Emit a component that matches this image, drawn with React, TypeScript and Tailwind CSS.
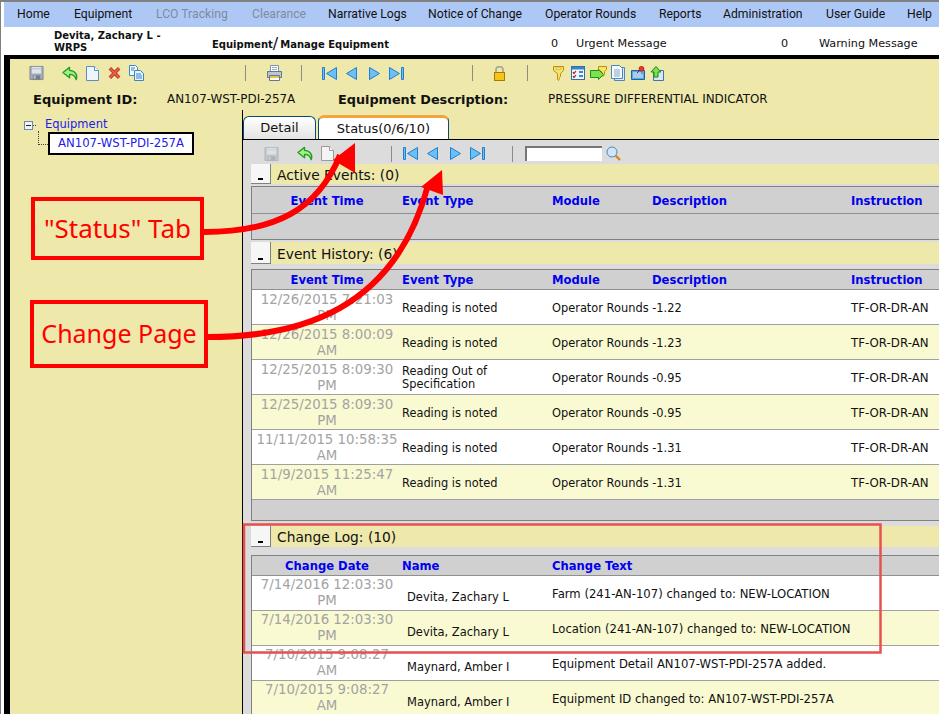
import React from "react";

const Save = ({ dim = false }: { dim?: boolean }) => (
  <svg width="15" height="16" viewBox="0 0 16 16" opacity={dim ? 0.45 : 1}>
    <path d="M1 1h14v14H1z" fill="#a4adb6" stroke="#838b94" />
    <rect x="3" y="1.5" width="10" height="7" fill="#dfe6ee" />
    <rect x="3" y="3" width="10" height="1" fill="#b4bec9" />
    <rect x="4" y="10.5" width="8" height="4.5" fill="#767e87" />
    <rect x="5" y="11" width="2" height="3" fill="#c8ced4" />
  </svg>
);
const Back = () => (
  <svg width="17" height="15" viewBox="0 0 18 15">
    <path d="M8 1 1 6.5 8 12V8.5c3.500 0 6 1.200 7 5.500 2-5-1-9.500-7-9.800z" fill="#a6ee86" stroke="#1f9e1f" strokeWidth="1.400" strokeLinejoin="round" />
  </svg>
);
const Doc = ({ dim = false }: { dim?: boolean }) => (
  <svg width="13" height="15" viewBox="0 0 13 15">
    <path d="M.5.500h8l4 4v10H.5z" fill={dim ? "#f4f4f4" : "#eef5fc"} stroke={dim ? "#9a9a9a" : "#5a8fc4"} />
    <path d="M8.500.500v4h4" fill="#fff" stroke={dim ? "#9a9a9a" : "#5a8fc4"} />
  </svg>
);
const Cross = () => (
  <svg width="13" height="14" viewBox="0 0 14 14">
    <path d="M2 2 12 12M12 2 2 12" stroke="#b5382a" strokeWidth="3.800" />
    <path d="M2 2 12 12M12 2 2 12" stroke="#f0603f" strokeWidth="1.800" />
  </svg>
);
const Copy = () => (
  <svg width="15" height="16" viewBox="0 0 15 16">
    <path d="M.5.500h6l2 2v8H.5z" fill="#f2f8fd" stroke="#3c86c6" />
    <path d="M5.500 5.500h6l3 3v7h-9z" fill="#e6f1fb" stroke="#3c86c6" />
    <path d="M2 3h4M2 5h3M7 9h5M7 11h6M7 13h6" stroke="#3c86c6" />
  </svg>
);
const Print = () => (
  <svg width="15" height="16" viewBox="0 0 15 16">
    <path d="M3.500.500h8v6h-8z" fill="#fff" stroke="#7f95ac" />
    <path d="M.5 6.500h14v6H.5z" fill="#b9c7d4" stroke="#64798e" />
    <path d="M2.500 10.500h10v5h-10z" fill="#fff" stroke="#64798e" />
    <rect x="3" y="11" width="9" height="2" fill="#f0c040" />
    <path d="M5 2.500h5M5 4.500h5" stroke="#9db0c2" />
  </svg>
);
const navFill = "#6cc0f5";
const navStroke = "#1f7fd0";
const First = () => (
  <svg width="15" height="13" viewBox="0 0 15 13">
    <path d="M.5.500h2v12h-2z" fill={navFill} stroke={navStroke} />
    <path d="M14.500.500v12l-10-6z" fill={navFill} stroke={navStroke} />
  </svg>
);
const Prev = () => (
  <svg width="11" height="13" viewBox="0 0 11 13">
    <path d="M10.500.500v12l-10-6z" fill={navFill} stroke={navStroke} />
  </svg>
);
const Next = () => (
  <svg width="11" height="13" viewBox="0 0 11 13">
    <path d="M.5.500v12l10-6z" fill={navFill} stroke={navStroke} />
  </svg>
);
const Last = () => (
  <svg width="15" height="13" viewBox="0 0 15 13">
    <path d="M.5.500v12l10-6z" fill={navFill} stroke={navStroke} />
    <path d="M12.500.500h2v12h-2z" fill={navFill} stroke={navStroke} />
  </svg>
);
const Lock = () => (
  <svg width="11" height="15" viewBox="0 0 11 15">
    <path d="M2 7V3.500a3.500 3 0 0 1 7 0V7" fill="none" stroke="#a8a8a0" strokeWidth="1.800" />
    <rect x=".5" y="6.500" width="10" height="8" fill="#f5c518" stroke="#a67c00" />
  </svg>
);
const Key = () => (
  <svg width="11" height="15" viewBox="0 0 11 15">
    <path d="M.5.500h10v4l-3 3v3l-1 1v1l-1 2-1-1V7.500l-4-3z" fill="#f7e26b" stroke="#c09000" />
    <rect x="3" y="2" width="5" height="1.500" fill="#fff" stroke="#c09000" strokeWidth=".5" />
  </svg>
);
const Check = () => (
  <svg width="14" height="14" viewBox="0 0 14 14">
    <rect x=".5" y=".5" width="13" height="13" fill="#eef5fb" stroke="#2f6fb0" />
    <rect x="1" y="1" width="12" height="2.500" fill="#3c86c6" />
    <path d="M2 6l1 1.500L5 5M2 10l1 1.500L5 9" stroke="#a01818" strokeWidth="1.200" fill="none" />
    <path d="M8 6h4M8 10h4" stroke="#3c86c6" strokeWidth="2" />
  </svg>
);
const ArrowKey = () => (
  <svg width="17" height="15" viewBox="0 0 17 15">
    <path d="M8.500.500h8v3l-2 2v3l-1.500 2-1-1V6l-3.500-2.500z" fill="#f7e26b" stroke="#c09000" />
    <path d="M.5 4.500h8v-1l5 5-5 5v-2h-8z" fill="#7fe04f" stroke="#189018" />
  </svg>
);
const Pages = () => (
  <svg width="14" height="16" viewBox="0 0 14 16">
    <path d="M3.500 2.500h10v13h-10z" fill="#dbe9f7" stroke="#4a86c0" />
    <path d="M.5.500h8l3 3v10H.5z" fill="#f4f9fe" stroke="#4a86c0" />
    <path d="M3 5h6M3 7h6M3 9h6M3 11h6" stroke="#7fa8d0" />
  </svg>
);
const Pin = () => (
  <svg width="15" height="14" viewBox="0 0 15 14">
    <path d="M.5 4.500h13v9H.5z" fill="#5aa6e0" stroke="#1f62a8" />
    <path d="M2 7h8M2 9h10M2 11h10" stroke="#e8f3fc" />
    <circle cx="10.500" cy="2.800" r="2.500" fill="#e8352a" stroke="#a01810" strokeWidth=".6" />
    <path d="M9 4 6 7" stroke="#a01810" />
  </svg>
);
const Up = () => (
  <svg width="14" height="15" viewBox="0 0 14 15">
    <path d="M3.500 4.500h10v10h-10z" fill="#d6e6f5" stroke="#3a78b5" />
    <path d="M6 .500 11 6H8v5H4V6H1z" fill="#7fe04f" stroke="#108a10" />
  </svg>
);
const Magnifier = () => (
  <svg width="15" height="15" viewBox="0 0 15 15">
    <circle cx="6" cy="6" r="5" fill="#cfe6f8" stroke="#4a86c0" />
    <path d="M9.500 9.500 14 14" stroke="#d08a20" strokeWidth="2.400" />
  </svg>
);
const Sep = ({ c = "bg-[#8c8c80]" }: { c?: string }) => <div className={`w-px h-[16px] ${c}`} />;

const menu: [string, number, boolean?][] = [
  ["Home", 57],
  ["Equipment", 82],
  ["LCO Tracking", 96, true],
  ["Clearance", 76, true],
  ["Narrative Logs", 100],
  ["Notice of Change", 117],
  ["Operator Rounds", 114],
  ["Reports", 64],
  ["Administration", 103],
  ["User Guide", 81],
  ["Help", 28],
];

const Band = ({ title, className = "" }: { title: string; className?: string }) => (
  <div className={`ml-[8px] flex items-center bg-[#eee8aa] ${className}`}>
    <div className="w-[20px] h-full bg-[#f6f6f6] border-r border-b border-[#808080] flex items-end justify-center pb-[3px]">
      <div className="w-[5px] h-[2px] bg-black" />
    </div>
    <span className="ml-[6px] text-[13.800px] text-[#111] pt-[2px]">{title}</span>
  </div>
);

const eventCols = "grid grid-cols-[150px_150px_100px_199px_120px]";
const logCols = "grid grid-cols-[150px_150px_420px]";

const EventHead = ({ h }: { h: string }) => (
  <div className={`${eventCols} ${h} items-center bg-[#d0d0d0] border-b border-[#909090] text-[11.600px] font-bold text-[#0000ee] whitespace-nowrap`}>
    <div className="text-center">Event Time</div>
    <div>Event Type</div>
    <div>Module</div>
    <div>Description</div>
    <div>Instruction</div>
  </div>
);

const events = [
  ["12/26/2015 7:21:03", "PM", ["Reading is noted"], "Operator Rounds -1.22"],
  ["12/26/2015 8:00:09", "AM", ["Reading is noted"], "Operator Rounds -1.23"],
  ["12/25/2015 8:09:30", "PM", ["Reading Out of", "Specification"], "Operator Rounds -0.95"],
  ["12/25/2015 8:09:30", "PM", ["Reading is noted"], "Operator Rounds -0.95"],
  ["11/11/2015 10:58:35", "AM", ["Reading is noted"], "Operator Rounds -1.31"],
  ["11/9/2015 11:25:47", "AM", ["Reading is noted"], "Operator Rounds -1.31"],
] as const;

const logs = [
  ["7/14/2016 12:03:30", "PM", "Devita, Zachary L", "Farm (241-AN-107) changed to: NEW-LOCATION"],
  ["7/14/2016 12:03:30", "PM", "Devita, Zachary L", "Location (241-AN-107) changed to: NEW-LOCATION"],
  ["7/10/2015 9:08:27", "AM", "Maynard, Amber I", "Equipment Detail AN107-WST-PDI-257A added."],
  ["7/10/2015 9:08:27", "AM", "Maynard, Amber I", "Equipment ID changed to: AN107-WST-PDI-257A"],
] as const;

const DateCell = ({ a, b, pad }: { a: string; b: string; pad: string }) => (
  <div className={`text-center text-[#a3a3a3] text-[13.330px] leading-[16px] whitespace-nowrap ${pad}`}>
    <div>{a}</div>
    <div>{b}</div>
  </div>
);

export default function App() {
  return (
    <div
      className="relative w-[939px] h-[714px] overflow-hidden bg-white text-[#111] border-t-2 border-l border-[#808080]"
      style={{ fontFamily: '"DejaVu Sans", Verdana, sans-serif' }}
    >
      <div className="pl-[3px] flex flex-col h-full">
        <div
          className="h-[25px] shrink-0 bg-[#aec8f5] flex items-center pl-[13px] text-[12.200px] text-[#111] whitespace-nowrap"
          style={{ fontFamily: 'Roboto, "Open Sans", sans-serif' }}
        >
          {menu.map(([t, w, dis]) => (
            <div key={t} style={{ width: w }} className={dis ? "text-[#7f8b9d]" : ""}>
              {t}
            </div>
          ))}
        </div>
        <div className="h-[28px] shrink-0 relative flex items-center text-[10px] font-bold">
          <div className="ml-[50px] w-[120px] leading-[12px] pt-[2px]">Devita, Zachary L - WRPS</div>
          <div className="ml-[38px] w-[339px] flex items-center pt-[6px]">
            Equipment<span className="text-[16px] font-normal leading-[12px] mr-[2px]">/</span> Manage Equipment
          </div>
          <div className="font-normal w-[25px] text-[11.200px] pt-[6px]">0</div>
          <div className="font-normal w-[205px] text-[11.200px] pt-[6px]">Urgent Message</div>
          <div className="font-normal w-[38px] text-[11.200px] pt-[6px]">0</div>
          <div className="font-normal text-[11.200px] pt-[6px]">Warning Message</div>
        </div>
        <div className="flex-1 min-h-0 border-t-4 border-l-[6px] border-black bg-[#eee8aa] flex flex-col">
          <div className="h-[28px] shrink-0 flex items-center pl-[19px]">
            <Save />
            <div className="w-[18px]" />
            <Back />
            <div className="w-[7px]" />
            <Doc />
            <div className="w-[9px]" />
            <Cross />
            <div className="w-[8px]" />
            <Copy />
            <div className="w-[101px]" />
            <Sep />
            <div className="w-[21px]" />
            <Print />
            <div className="w-[19px]" />
            <Sep />
            <div className="w-[20px]" />
            <First />
            <div className="w-[9px]" />
            <Prev />
            <div className="w-[12px]" />
            <Next />
            <div className="w-[9px]" />
            <Last />
            <div className="w-[68px]" />
            <Sep />
            <div className="w-[21px]" />
            <Lock />
            <div className="w-[22px]" />
            <Sep />
            <div className="w-[25px]" />
            <Key />
            <div className="w-[7px]" />
            <Check />
            <div className="w-[5px]" />
            <ArrowKey />
            <div className="w-[4px]" />
            <Pages />
            <div className="w-[6px]" />
            <Pin />
            <div className="w-[4px]" />
            <Up />
          </div>
          <div className="h-[23px] shrink-0 flex items-center whitespace-nowrap pt-[2px]">
            <div className="ml-[23px] w-[134px] font-bold text-[13px]">Equipment ID:</div>
            <div className="w-[171px] text-[11.900px]">AN107-WST-PDI-257A</div>
            <div className="w-[210px] font-bold text-[12.800px]">Equipment Description:</div>
            <div className="text-[11.900px]">PRESSURE DIFFERENTIAL INDICATOR</div>
          </div>
          <div className="flex-1 min-h-0 flex">
            <div className="w-[232px] shrink-0 pt-[9px] pl-[14px]">
              <div className="flex items-center h-[12px]">
                <div className="w-[9px] h-[9px] border border-[#6c8cb0] bg-[#f0f4f8] flex items-center justify-center">
                  <div className="w-[5px] h-px bg-[#223]" />
                </div>
                <div className="w-[3px] border-t border-dotted border-[#444] mr-[9px]" />
                <span className="text-[11.500px] text-[#2020ee]">Equipment</span>
              </div>
              <div className="flex items-center ml-[14px] mt-[1px]">
                <div className="w-[10px] h-[14px] border-l border-b border-dotted border-[#444] -mt-[12px]" />
                <div className="h-[23px] w-[146px] border-[2px] border-black bg-white text-[#2020ee] text-[11.700px] flex items-center justify-center">
                  AN107-WST-PDI-257A
                </div>
              </div>
            </div>
            <div className="flex-1 min-w-0 border-l border-black flex flex-col">
              <div className="h-[30px] shrink-0 flex items-end border-b border-black gap-[2px] text-[13px]">
                <div className="w-[73px] h-[23px] rounded-t-[6px] border border-b-0 border-[#0b4a78] bg-gradient-to-b from-white to-[#e4e4e4] flex items-center justify-center">
                  Detail
                </div>
                <div className="w-[131px] h-[24px] rounded-t-[6px] border border-b-0 border-t-[3px] border-[#0b4a78] border-t-[#f0a63a] bg-white flex items-center justify-center">
                  Status(0/6/10)
                </div>
              </div>
              <div className="flex-1 min-h-0 bg-[#dcdcdc] overflow-hidden">
                <div className="h-[24px] flex items-center pl-[21px] pt-[3px]">
                  <Save dim />
                  <div className="w-[18px]" />
                  <Back />
                  <div className="w-[7px]" />
                  <Doc dim />
                  <div className="w-[57px]" />
                  <Sep />
                  <div className="w-[11px]" />
                  <First />
                  <div className="w-[9px]" />
                  <Prev />
                  <div className="w-[12px]" />
                  <Next />
                  <div className="w-[9px]" />
                  <Last />
                  <div className="w-[27px]" />
                  <Sep />
                  <div className="w-[12px]" />
                  <div className="w-[77px] h-[15px] bg-white border-t-2 border-l-2 border-[#777]" />
                  <div className="w-[4px]" />
                  <Magnifier />
                </div>
                <Band title="Active Events: (0)" className="h-[20px]" />
                <div className="ml-[8px] mt-[2px] w-[800px] border border-[#808080] bg-[#d0d0d0]">
                  <EventHead h="h-[27px] pt-[4px]" />
                  <div className="h-[25px]" />
                </div>
                <Band title="Event History: (6)" className="h-[22px] mt-[2px]" />
                <div className="ml-[8px] mt-[5px] w-[800px] border border-[#808080] bg-[#d0d0d0]">
                  <EventHead h="h-[20px] pt-[2px]" />
                  {events.map((r, i) => (
                    <div
                      key={i}
                      className={`${eventCols} h-[35px] items-center border-b border-[#a0a0a0] text-[11.400px] whitespace-nowrap ${
                        i % 2 ? "bg-[#fafad2]" : "bg-white"
                      }`}
                    >
                      <DateCell a={r[0]} b={r[1]} pad="pt-[1px]" />
                      <div className={`leading-[13px] ${r[2].length > 1 ? "pt-[2px]" : "pt-[3px]"}`}>
                        {r[2].map((l) => (
                          <div key={l}>{l}</div>
                        ))}
                      </div>
                      <div className="col-span-2 pt-[4px]">{r[3]}</div>
                      <div className="pt-[4px] text-[11.800px]">TF-OR-DR-AN</div>
                    </div>
                  ))}
                  <div className="h-[20px]" />
                </div>
                <Band title="Change Log: (10)" className="h-[21px] mt-[5px]" />
                <div className="ml-[8px] mt-[8px] w-[800px] border border-[#808080] bg-[#d0d0d0]">
                  <div className={`${logCols} h-[20px] pt-[2px] items-center border-b border-[#909090] text-[11.600px] font-bold text-[#0000ee]`}>
                    <div className="text-center">Change Date</div>
                    <div>Name</div>
                    <div>Change Text</div>
                  </div>
                  {logs.map((r, i) => (
                    <div
                      key={i}
                      className={`${logCols} h-[35px] items-center border-b border-[#a0a0a0] text-[11.500px] whitespace-nowrap ${
                        i % 2 ? "bg-[#fafad2]" : "bg-white"
                      }`}
                    >
                      <DateCell a={r[0]} b={r[1]} pad="" />
                      <div className="pl-[5px] pt-[10px]">{r[2]}</div>
                      <div className="pt-[3px] text-[11.650px]">{r[3]}</div>
                    </div>
                  ))}
                </div>
              </div>
            </div>
          </div>
        </div>
      </div>

      <div className="absolute left-[30px] top-[195px] w-[173px] h-[63px] border-[4px] border-[#ff0000] text-[#ff0000] flex items-center justify-center text-[26px]" style={{ fontFamily: '"Noto Sans", sans-serif' }}>
        "Status" Tab
      </div>
      <div className="absolute left-[29px] top-[298px] w-[178px] h-[68px] border-[4px] border-[#ff0000] text-[#ff0000] flex items-center justify-center text-[25px]" style={{ fontFamily: '"Noto Sans", sans-serif' }}>
        Change Page
      </div>
      <svg className="absolute left-[-1px] top-[-2px] pointer-events-none" width="939" height="714" viewBox="0 0 939 714">
        <path d="M204 232C275 232 318 210 340 155" fill="none" stroke="#ff0000" strokeWidth="6" />
        <path d="M355 143 333 160 355 173z" fill="#ff0000" />
        <path d="M208 337C300 337 395 310 428 185" fill="none" stroke="#ff0000" strokeWidth="6" />
        <path d="M442 170 421 187 443 195z" fill="#ff0000" />
        <rect x="244" y="524.500" width="636.500" height="128" fill="none" stroke="#e85050" strokeWidth="2.500" />
      </svg>
    </div>
  );
}
